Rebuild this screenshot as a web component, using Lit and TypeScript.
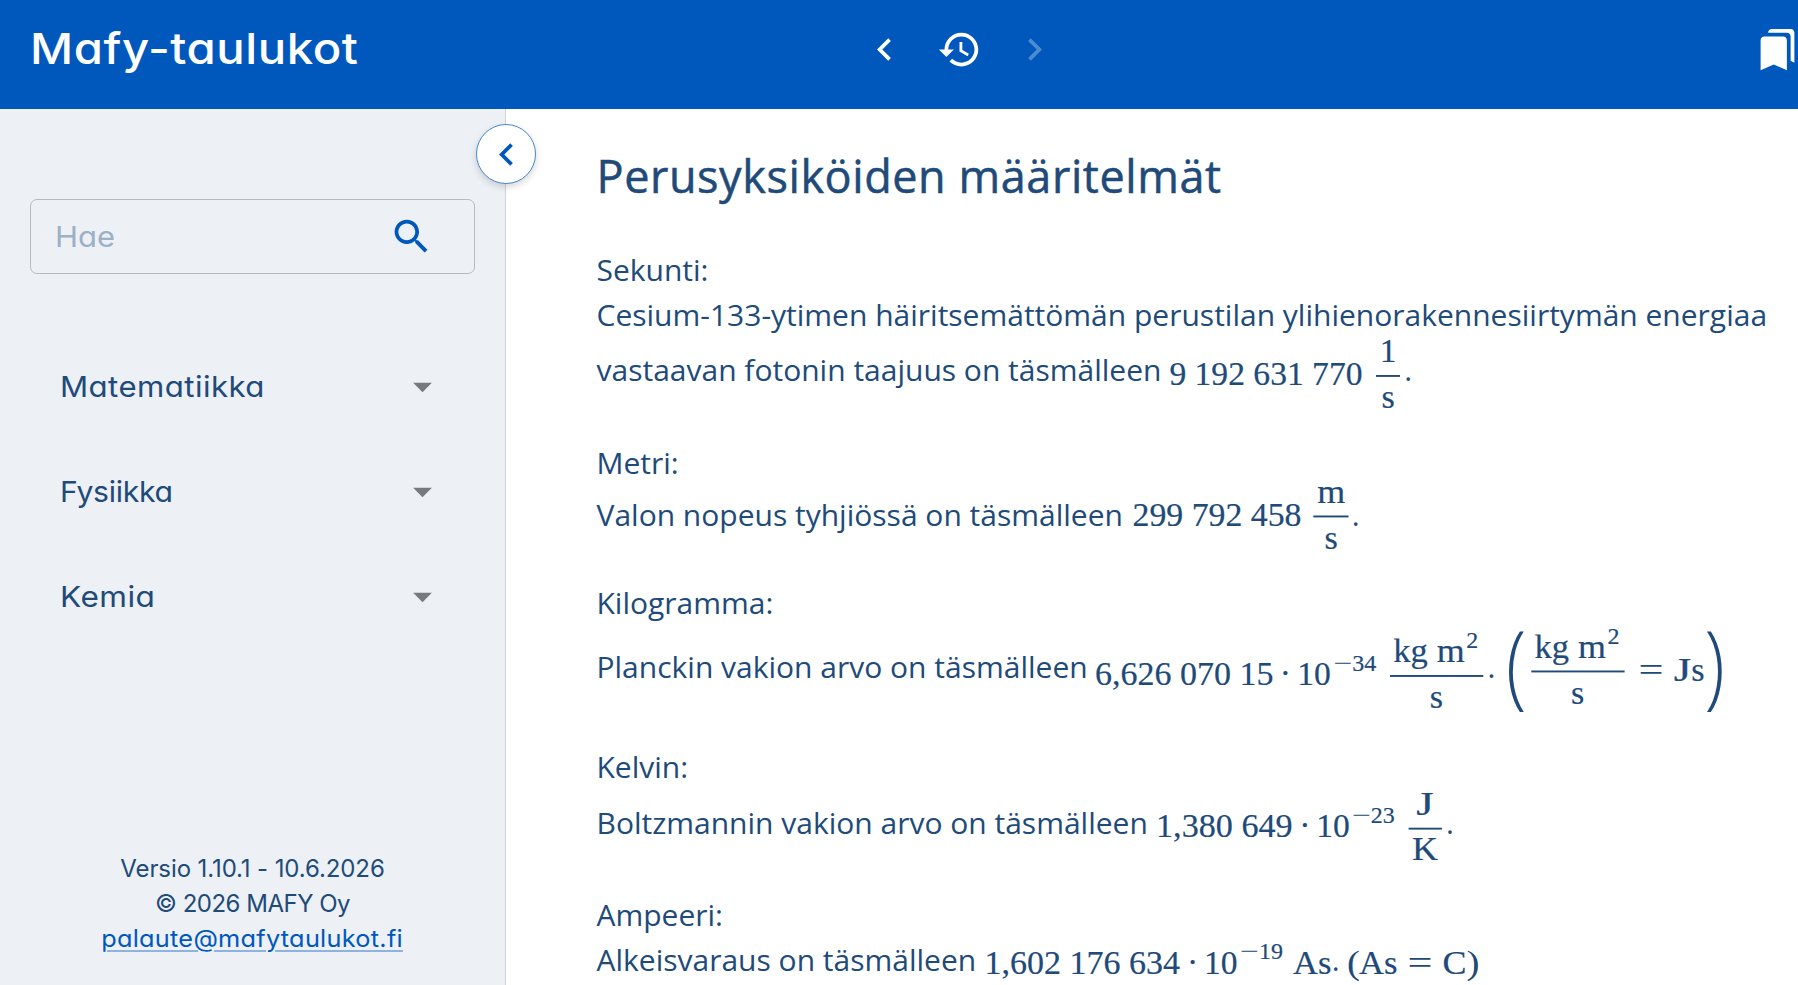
import { LitElement, html, svg, css, nothing } from "lit";
import { customElement, property } from "lit/decorators.js";

const ICONS: Record<string, string> = {
  left: "M15.41 7.41 14 6l-6 6 6 6 1.41-1.41L10.83 12z",
  right: "M10 6 8.59 7.41 13.17 12l-4.58 4.59L10 18l6-6z",
  history:
    "M13 3c-4.97 0-9 4.03-9 9H1l3.89 3.89.07.14L9 12H6c0-3.87 3.13-7 7-7s7 3.13 7 7-3.13 7-7 7c-1.93 0-3.68-.79-4.94-2.06l-1.42 1.42C8.27 19.99 10.51 21 13 21c4.97 0 9-4.03 9-9s-4.03-9-9-9zm-1 5v5l4.28 2.54.72-1.21-3.5-2.08V8H12z",
  bookmarks:
    "M19 18l2 1V3c0-1.1-.9-2-2-2H8.99C7.89 1 7 1.9 7 3h10c1.1 0 2 .9 2 2v13zM15 5H5c-1.1 0-2 .9-2 2v16l7-3 7 3V7c0-1.1-.9-2-2-2z",
  search:
    "M15.5 14h-.79l-.28-.27C15.41 12.59 16 11.11 16 9.5 16 5.91 13.09 3 9.5 3S3 5.91 3 9.5 5.91 16 9.5 16c1.61 0 3.09-.59 4.23-1.57l.27.28v.79l5 4.99L20.49 19l-4.99-5zm-6 0C7.01 14 5 11.99 5 9.5S7.01 5 9.5 5 14 7.01 14 9.5 11.99 14 9.5 14z",
  drop: "M7 10l5 5 5-5z",
};

const icon = (name: string, cls = "") => html`<svg class="icon ${cls}" viewBox="0 0 24 24"><path d=${ICONS[name]}></path></svg>`;

/** A run of math text: x and y are relative to the start of the formula and the baseline of the prose. */
interface Run {
  t: string;
  x: number;
  y: number;
  size?: number;
  len?: number;
  sx?: number;
  cls?: string;
}
/** A fraction bar. */
interface Bar {
  x: number;
  y: number;
  w: number;
}

@customElement("math-formula")
export class MathFormula extends LitElement {
  @property({ attribute: false }) runs: Run[] = [];
  @property({ attribute: false }) bars: Bar[] = [];
  @property({ type: Number }) width = 0;

  static styles = css`
    :host {
      display: block;
      flex: none;
    }
    svg {
      display: block;
      overflow: visible;
      fill: currentColor;
      font-family: "Liberation Serif", "Times New Roman", serif;
    }
    text {
      white-space: pre;
      stroke: currentColor;
      stroke-width: 0.2px;
    }
    .tall {
      font-family: "Open Sans", sans-serif;
      font-weight: 300;
      stroke: none;
    }
    .plain {
      stroke: none;
    }
  `;

  render() {
    return html`<svg width=${this.width} height="20" viewBox="0 -20 ${this.width} 20">
      ${this.runs.map(
        (r) => svg`<text
          class=${r.cls ?? nothing}
          transform="translate(${r.x} ${r.y}) scale(${r.sx ?? 1} 1)"
          font-size=${r.size ?? 33.6}
          textLength=${r.len ?? nothing}
          lengthAdjust=${r.len ? "spacingAndGlyphs" : nothing}>${r.t}</text>`
      )}
      ${this.bars.map((b) => svg`<rect x=${b.x} y=${b.y} width=${b.w} height="1.9"></rect>`)}
    </svg>`;
  }
}

const shift = (runs: Run[], x: number, y: number): Run[] => runs.map((r) => ({ ...r, x: r.x + x, y: r.y + y }));

/** kg m² over s, relative to the left end of the bar. */
const KGM2: Run[] = [
  { t: "kg", x: 3, y: -14, len: 34.5 },
  { t: "m", x: 46.6, y: -14, len: 28 },
  { t: "2", x: 76, y: -28.5, size: 24 },
  { t: "s", x: 39.6, y: 32.3, len: 13.3 },
];

const FORMULAS: Record<string, { width: number; runs: Run[]; bars: Bar[] }> = {
  second: {
    width: 235,
    runs: [
      { t: "9 192 631 770", x: 0.4, y: 4 },
      { t: "1", x: 210.7, y: -19.5 },
      { t: "s", x: 212.4, y: 27, len: 13.3 },
    ],
    bars: [{ x: 207, y: -6, w: 24 }],
  },
  metre: {
    width: 221,
    runs: [
      { t: "299 792 458", x: 1.5, y: -0.5, len: 169 },
      { t: "m", x: 186.2, y: -23.5, len: 28 },
      { t: "s", x: 193.4, y: 22.7, len: 13.3 },
    ],
    bars: [{ x: 182.3, y: -10.5, w: 35.2 }],
  },
  kilogram: {
    width: 392,
    runs: [
      { t: "6,626 070 15", x: 0, y: 7, len: 178.5 },
      { t: "·", x: 184.7, y: 6 },
      { t: "10", x: 202.3, y: 7 },
      { t: "−", x: 238.5, y: -7.5, size: 24, len: 19, cls: "plain" },
      { t: "34", x: 257.2, y: -7.5, size: 24 },
      ...shift(KGM2, 295.2, -2),
    ],
    bars: [{ x: 295, y: -3, w: 93.3 }],
  },
  joule: {
    width: 220,
    runs: [
      { t: "(", x: 3, y: 19, size: 93, sx: 0.8, cls: "tall" },
      ...shift(KGM2, 28.5, -6),
      { t: "=", x: 135.5, y: 2.5, len: 25, cls: "plain" },
      { t: "J", x: 170.8, y: 2.5, len: 17.5 },
      { t: "s", x: 188.3, y: 2.5, len: 13.3 },
      { t: ")", x: 201.5, y: 19, size: 93, sx: 0.8, cls: "tall" },
    ],
    bars: [{ x: 28.3, y: -7.5, w: 93.3 }],
  },
  kelvin: {
    width: 290.3,
    runs: [
      { t: "1,380 649", x: 0, y: 3, len: 136.7 },
      { t: "·", x: 143.2, y: 2 },
      { t: "10", x: 160.2, y: 3 },
      { t: "−", x: 196, y: -11, size: 24, len: 19, cls: "plain" },
      { t: "23", x: 214.7, y: -11, size: 24 },
      { t: "J", x: 260.2, y: -19.3, len: 17.5 },
      { t: "K", x: 256, y: 26.5, len: 26 },
    ],
    bars: [{ x: 252.6, y: -6.3, w: 33.3 }],
  },
  ampere: {
    width: 347.7,
    runs: [
      { t: "1,602 176 634", x: 0.5, y: 3, len: 195.5 },
      { t: "·", x: 203, y: 2 },
      { t: "10", x: 220, y: 3 },
      { t: "−", x: 256, y: -12, size: 24, len: 19, cls: "plain" },
      { t: "19", x: 275, y: -12, size: 24 },
      { t: "As", x: 309, y: 3, len: 38.5 },
    ],
    bars: [],
  },
  coulomb: {
    width: 135,
    runs: [
      { t: "(", x: 0, y: 3, len: 13, cls: "plain" },
      { t: "As", x: 12, y: 3, len: 38.5 },
      { t: "=", x: 60.5, y: 3, len: 25, cls: "plain" },
      { t: "C", x: 95.5, y: 3, len: 24 },
      { t: ")", x: 119.5, y: 3, len: 13, cls: "plain" },
    ],
    bars: [],
  },
};

const formula = (key: string) => {
  const f = FORMULAS[key];
  return html`<math-formula .runs=${f.runs} .bars=${f.bars} .width=${f.width}></math-formula>`;
};

@customElement("app-root")
export class AppRoot extends LitElement {
  static styles = css`
    :host {
      display: flex;
      flex-direction: column;
      height: 985px;
      overflow: hidden;
      background: #fff;
      color: #204a79;
      font-family: "Open Sans", sans-serif;
    }
    .icon {
      display: block;
      flex: none;
      width: 45px;
      height: 45px;
      fill: currentColor;
    }
    .geo {
      font-family: Inter, sans-serif;
      font-feature-settings: "cv11" 1, "ss03" 1;
    }
    header {
      flex: none;
      display: grid;
      grid-template-columns: 832px 195px 1fr;
      box-sizing: border-box;
      height: 109px;
      padding: 27px 0 0 30px;
      background: #0058bd;
      color: #fff;
    }
    .brand {
      justify-self: start;
      margin: -6px 0 0;
      font-size: 43px;
      line-height: 55px;
      font-weight: 500;
      letter-spacing: 0.5px;
      transform: scaleX(1.1);
      transform-origin: 0 0;
    }
    .nav {
      display: flex;
      gap: 30px;
    }
    .dim {
      opacity: 0.3;
    }
    .saved {
      justify-self: end;
      margin-right: -2px;
    }
    .body {
      flex: 1;
      display: flex;
      min-height: 0;
    }
    aside {
      position: relative;
      flex: none;
      display: flex;
      flex-direction: column;
      box-sizing: border-box;
      width: 506px;
      padding: 90px 30px 0;
      border-right: 1px solid #cfd3d9;
      background: #edf1f6;
    }
    .toggle {
      position: absolute;
      top: 15px;
      right: -31px;
      display: flex;
      align-items: center;
      justify-content: center;
      box-sizing: border-box;
      width: 60px;
      height: 60px;
      padding: 0;
      border: 1px solid #4787d0;
      border-radius: 50%;
      background: #fff;
      color: #0058bd;
      box-shadow: 0 3px 7px rgba(0, 0, 0, 0.16);
    }
    .search {
      display: flex;
      align-items: center;
      justify-content: space-between;
      box-sizing: border-box;
      height: 75px;
      padding: 0 40px 0 24px;
      border: 1px solid #b7babf;
      border-radius: 7px;
      color: #0058bd;
    }
    .hint {
      color: #9cb0c7;
      font-size: 29px;
      transform: scaleX(1.07);
      transform-origin: 0 0;
    }
    .menu {
      display: flex;
      flex-direction: column;
      margin: 60px 0 0;
      padding: 0;
      list-style: none;
    }
    .menu li {
      display: flex;
      align-items: center;
      justify-content: space-between;
      height: 105px;
      padding: 0 30px;
      font-size: 29px;
      letter-spacing: 0.4px;
    }
    .menu span {
      transform: scaleX(1.075);
      transform-origin: 0 0;
    }
    .menu li:nth-child(2) span {
      transform: scaleX(1.04);
      letter-spacing: -0.3px;
    }
    .menu li:nth-child(3) span {
      transform: scaleX(1.09);
    }
    .menu .icon {
      color: #77797c;
    }
    .foot {
      margin-top: auto;
      padding-bottom: 29px;
      text-align: center;
      font-size: 24px;
      line-height: 35px;
      letter-spacing: -0.1px;
    }
    .owner {
      letter-spacing: -0.5px;
    }
    .foot a {
      display: inline-block;
      color: #0058bd;
      letter-spacing: 0.25px;
      transform: scaleX(1.055);
      text-decoration: underline;
      text-decoration-color: #8eb2e2;
      text-decoration-thickness: 2px;
      text-underline-offset: 3px;
    }
    main {
      flex: 1;
      min-width: 0;
      padding-left: 90.5px;
      font-size: 30px;
      line-height: 45px;
      white-space: pre;
    }
    h1 {
      margin: 35px 0 0;
      font-size: 45px;
      line-height: 64px;
      font-weight: 400;
      letter-spacing: 0.57px;
      -webkit-text-stroke: 0.5px currentColor;
    }
    .unit {
      display: flex;
      flex-direction: column;
    }
    .line {
      display: flex;
      align-items: baseline;
      height: 45px;
    }
    .u1 { margin-top: 39px; }
    .u1 .eq { margin-top: 10px; }
    .u2 { margin-top: 48px; }
    .u2 .eq { margin-top: 7px; }
    .u3 { margin-top: 43px; }
    .u3 .eq { margin-top: 19px; }
    .u4 { margin-top: 55px; }
    .u4 .eq { margin-top: 11px; }
    .u5 { margin-top: 47px; }
  `;

  render() {
    return html`
      <header>
        <h2 class="brand geo">Mafy-taulukot</h2>
        <nav class="nav">${icon("left")}${icon("history")}${icon("right", "dim")}</nav>
        <div class="saved">${icon("bookmarks")}</div>
      </header>
      <div class="body">
        <aside class="geo">
          <button class="toggle">${icon("left")}</button>
          <div class="search"><span class="hint">Hae</span>${icon("search")}</div>
          <ul class="menu">
            ${["Matematiikka", "Fysiikka", "Kemia"].map((name) => html`<li><span>${name}</span>${icon("drop")}</li>`)}
          </ul>
          <div class="foot">
            <div>Versio 1.10.1 - 10.6.2026</div>
            <div class="owner">© 2026 MAFY Oy</div>
            <div><a>palaute@mafytaulukot.fi</a></div>
          </div>
        </aside>
        <main><h1>Perusyksiköiden määritelmät</h1><section class="unit u1"><div class="line">Sekunti:</div><div class="line">Cesium-133-ytimen häiritsemättömän perustilan ylihienorakennesiirtymän energiaa</div><div class="line eq"><span>vastaavan fotonin taajuus on täsmälleen </span>${formula("second")}<span>.</span></div></section><section class="unit u2"><div class="line">Metri:</div><div class="line eq"><span>Valon nopeus tyhjiössä on täsmälleen </span>${formula("metre")}<span>.</span></div></section><section class="unit u3"><div class="line">Kilogramma:</div><div class="line eq"><span>Planckin vakion arvo on täsmälleen </span>${formula("kilogram")}<span>. </span>${formula("joule")}</div></section><section class="unit u4"><div class="line">Kelvin:</div><div class="line eq"><span>Boltzmannin vakion arvo on täsmälleen </span>${formula("kelvin")}<span>.</span></div></section><section class="unit u5"><div class="line">Ampeeri:</div><div class="line"><span>Alkeisvaraus on täsmälleen </span>${formula("ampere")}<span>. </span>${formula("coulomb")}</div></section></main>
      </div>
    `;
  }
}
